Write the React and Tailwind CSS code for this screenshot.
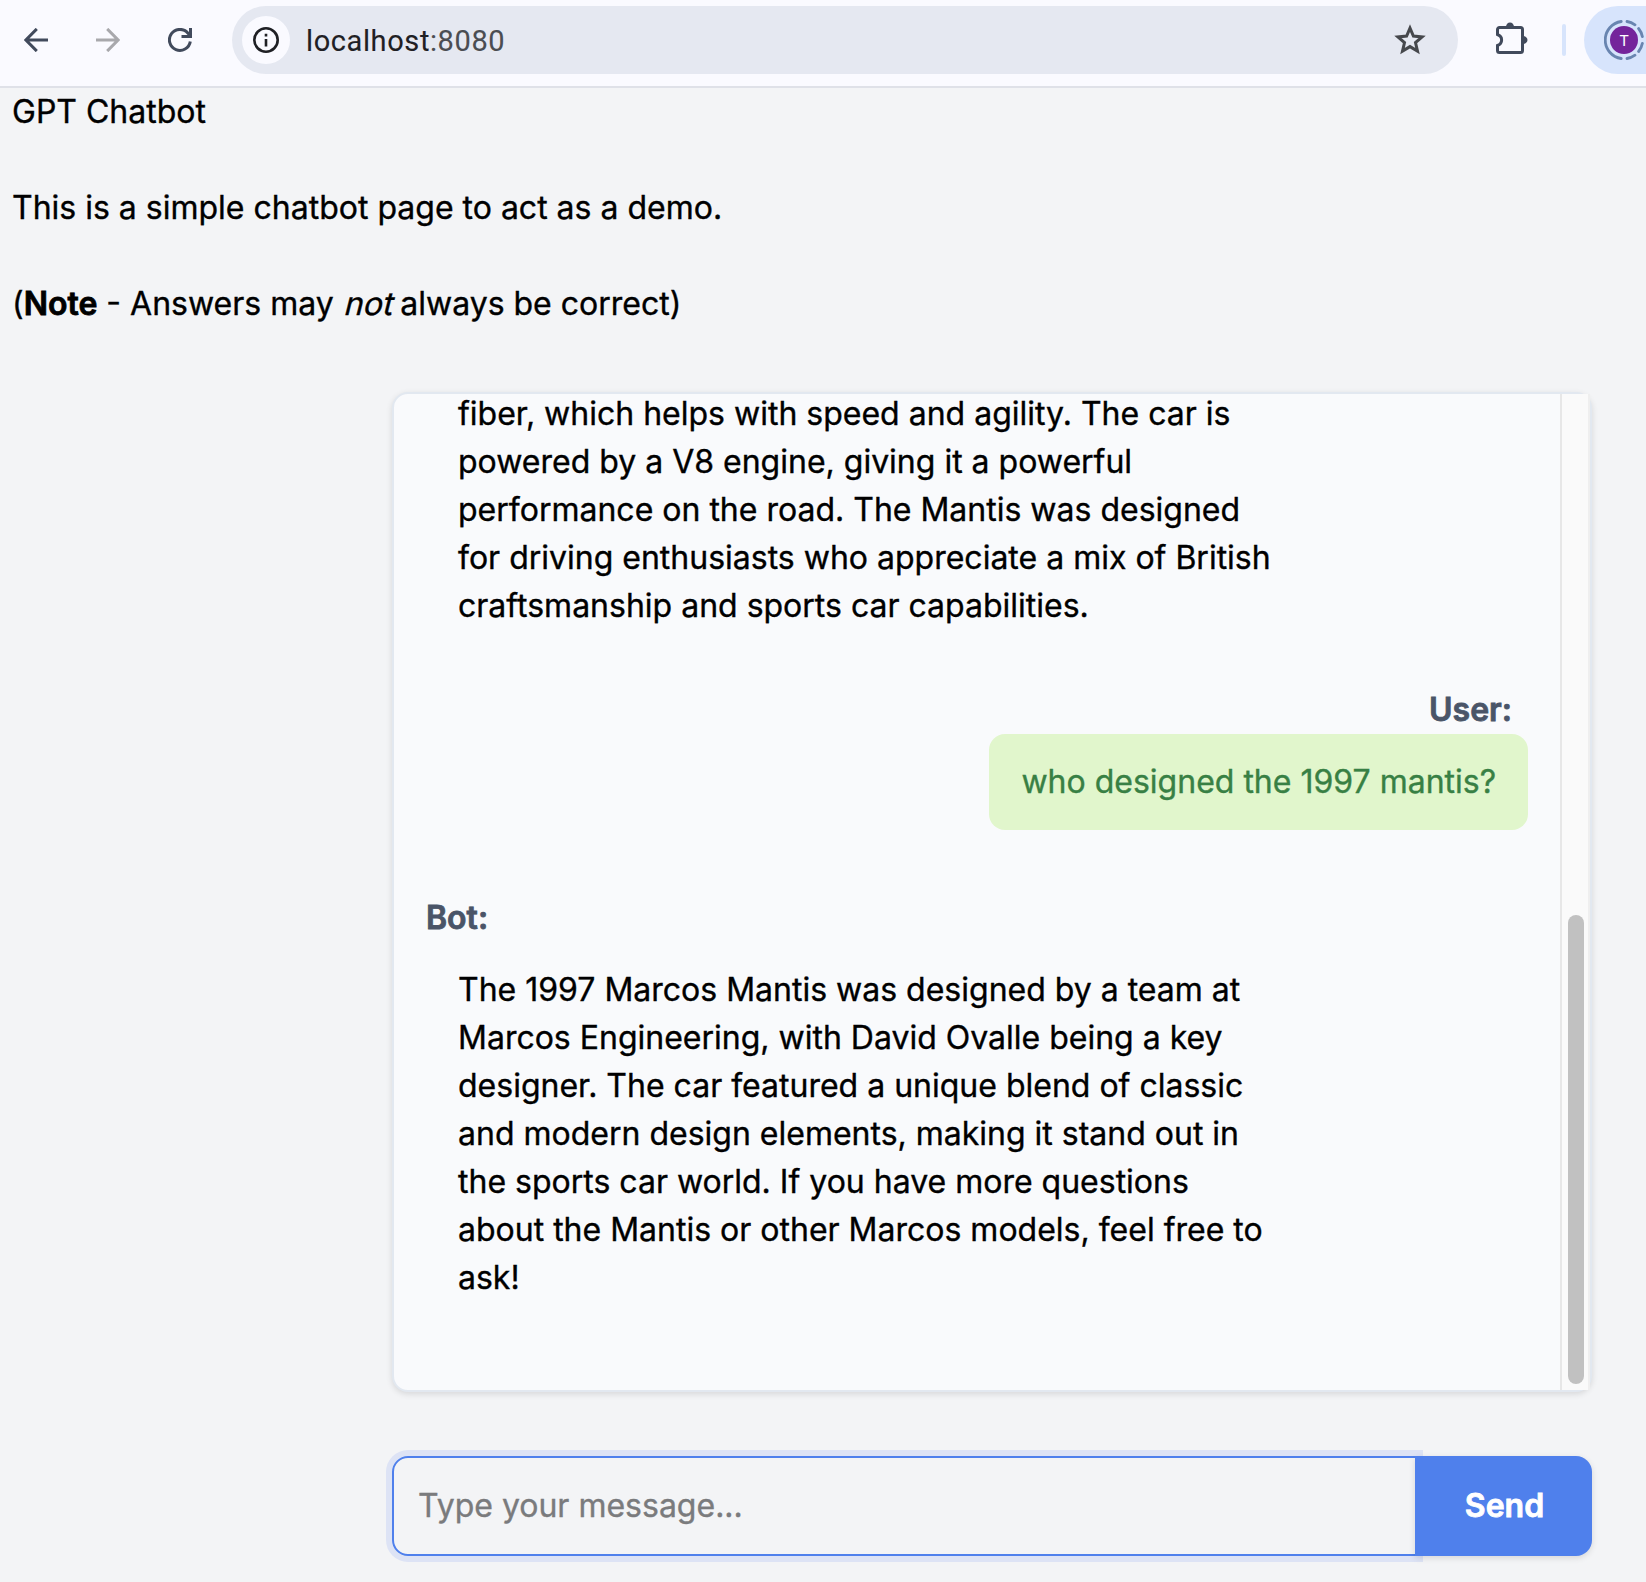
import React from "react";

function BackIcon() {
  return (
    <svg className="h-6 w-6" viewBox="0 0 24 24" fill="none" stroke="currentColor" strokeWidth="3">
      <path d="M24 12H2.5M12.8 0.9L1.9 12l10.9 11.1" />
    </svg>
  );
}

function ReloadIcon() {
  return (
    <svg className="h-6 w-6" viewBox="0 0 24 24" fill="none" stroke="currentColor" strokeWidth="3">
      <path d="M22.3 13.5A10.5 10.5 0 1 1 20 5.2L22 8" />
      <path d="M22.5 0v8.5H13.5" />
    </svg>
  );
}

function InfoIcon() {
  return (
    <svg className="h-[26px] w-[26px]" viewBox="0 0 26 26" fill="none" stroke="#1f2024">
      <circle cx="13" cy="13" r="11.7" strokeWidth="2.6" />
      <path d="M13 12v7.5M13 6.8v2.6" strokeWidth="2.6" />
    </svg>
  );
}

function StarIcon() {
  return (
    <svg className="h-8 w-8" viewBox="0 0 32 32" fill="none" stroke="#46484c" strokeWidth="3">
      <path d="M16 4.1l3.4 8 8.7.8-6.6 5.7 2 8.5L16 22.600l-7.500 4.500 2-8.500-6.600-5.700 8.700-.8z" />
    </svg>
  );
}

function PuzzleIcon() {
  return (
    <svg className="h-8 w-8" viewBox="0 0 32 32" fill="none" stroke="#414a5c" strokeWidth="3">
      <path d="M1.500 12.500V7.500a2 2 0 0 1 2-2H24.500a2 2 0 0 1 2 2V28.500a2 2 0 0 1-2 2H3.500a2 2 0 0 1-2-2V23.500C7 21.500 7 14.500 1.500 12.500Z" />
      <path d="M10 5a4 4.500 0 0 1 8 0zM27 14a4.500 4 0 0 1 0 8z" fill="#414a5c" stroke="none" />
    </svg>
  );
}

function ProfileRing() {
  return (
    <svg className="h-10 w-10 shrink-0" viewBox="0 0 40 40" fill="none">
      <g stroke="#6985b0" strokeWidth="2.800" strokeLinecap="round">
        <path d="M17.200 1.500A18.700 18.700 0 0 0 17.200 38.500" />
        <path d="M23 1.500A18.700 18.700 0 0 1 31 4.800" />
        <path d="M34.600 8.500A18.700 18.700 0 0 1 38.400 16.700" />
        <path d="M38.400 23.300A18.700 18.700 0 0 1 34.600 31.500" />
        <path d="M31 35.200A18.700 18.700 0 0 1 23 38.500" />
      </g>
      <circle cx="20" cy="20" r="14" fill="#74249b" />
      <text x="20" y="25.500" textAnchor="middle" fontSize="15.500" fill="#fff" fontFamily="Roboto, sans-serif">T</text>
    </svg>
  );
}

function Toolbar() {
  return (
    <header className="flex h-[88px] items-start border-b-2 border-[#dfe1e8] bg-[#fafaff] pt-1.5 font-[Roboto,sans-serif] [-webkit-text-stroke:0.1px]">
      <div className="flex h-[68px] w-[232px] shrink-0 items-center gap-12 pl-6 text-[#414a5c]">
        <BackIcon />
        <span className="rotate-180 text-[#a8a8ac]"><BackIcon /></span>
        <ReloadIcon />
      </div>
      <div className="flex h-[68px] w-[1226px] shrink-0 items-center rounded-full bg-[#e5e8f1] pr-8 pl-2.5">
        <div className="flex h-12 w-12 items-center justify-center rounded-full bg-[#fafaff]">
          <InfoIcon />
        </div>
        <div className="ml-4 flex-1 pt-px text-[29px] leading-8 tracking-[0.600px] text-[#1f2024]">
          localhost<span className="text-[#4b4d52]">:8080</span>
        </div>
        <StarIcon />
      </div>
      <div className="ml-[38px] flex h-[64px] items-center"><PuzzleIcon /></div>
      <div className="mt-[18px] ml-[34px] h-8 w-1 shrink-0 rounded-full bg-[#d7e4fc]" />
      <div className="ml-[18px] flex h-[68px] min-w-0 flex-1 items-center rounded-l-full bg-[#d7e4fc] pl-5">
        <ProfileRing />
      </div>
    </header>
  );
}

function Lines({ lines }) {
  return lines.map((line) => (
    <span key={line} className="block whitespace-nowrap">{line}</span>
  ));
}

const firstAnswer = [
  "fiber, which helps with speed and agility. The car is",
  "powered by a V8 engine, giving it a powerful",
  "performance on the road. The Mantis was designed",
  "for driving enthusiasts who appreciate a mix of British",
  "craftsmanship and sports car capabilities.",
];

const secondAnswer = [
  "The 1997 Marcos Mantis was designed by a team at",
  "Marcos Engineering, with David Ovalle being a key",
  "designer. The car featured a unique blend of classic",
  "and modern design elements, making it stand out in",
  "the sports car world. If you have more questions",
  "about the Mantis or other Marcos models, feel free to",
  "ask!",
];

function ChatLog() {
  return (
    <section className="flex h-[1000px] w-[1200px] rounded-2xl border-2 border-[#e2e8f0] bg-[#f9fafc] shadow-[0_2px_6px_rgba(0,0,0,0.12)]">
      <div className="flex flex-1 flex-col overflow-hidden rounded-l-[14px] px-8">
        <div className="-mt-1 px-8">
          <Lines lines={firstAnswer} />
        </div>
        <div className="mt-14 flex flex-col items-end">
          <div className="pr-4 font-semibold text-[#4a5568] [-webkit-text-stroke:0.8px]">User:</div>
          <div className="rounded-2xl bg-[#e1f6cc] px-8 py-6 text-[#388044]">who designed the 1997 mantis?</div>
        </div>
        <div className="mt-16">
          <div className="font-semibold text-[#4a5568] [-webkit-text-stroke:0.8px]">Bot:</div>
          <div className="px-8 py-6">
            <Lines lines={secondAnswer} />
          </div>
        </div>
      </div>
      <div className="flex w-[30px] flex-col items-center justify-end border-r-2 border-l-2 border-r-[#efefef] border-l-[#e7e7e7] bg-[#fafafa] pb-1.5">
        <div className="h-[469px] w-4 translate-x-px rounded-full bg-[#c1c1c1]" />
      </div>
    </section>
  );
}

function Composer() {
  return (
    <form className="mt-16 flex h-[100px] w-[1200px]">
      <input
        className="min-w-0 flex-1 rounded-l-2xl border-2 border-[#4f80ec] px-6 shadow-[0_0_0_6px_#dde3f5] outline-none placeholder:text-[#7a7b7d]"
        placeholder="Type your message..."
      />
      <button type="button" className="relative -ml-0.5 w-[177px] rounded-r-2xl bg-[#4f80ec] pl-0.5 font-semibold text-white shadow-[0_2px_6px_rgba(0,0,0,0.12)] [-webkit-text-stroke:0.8px]">
        Send
      </button>
    </form>
  );
}

export default function App() {
  return (
    <div className="h-[1582px] w-[1646px] overflow-hidden bg-[#f3f4f6] font-[Inter,sans-serif] text-[32px] leading-[48px] text-black [-webkit-text-stroke:0.35px]">
      <Toolbar />
      <div className="flex h-[304px] flex-col gap-12 px-3">
        <p>GPT Chatbot</p>
        <p>This is a simple chatbot page to act as a demo.</p>
        <p>(<strong className="font-semibold [-webkit-text-stroke:0.8px]">Note</strong> - Answers may <span className="inline-block origin-[50%_65%] translate-x-px -skew-x-[14deg]">not</span> always be correct)</p>
      </div>
      <main className="pl-[392px]">
        <ChatLog />
        <Composer />
      </main>
    </div>
  );
}
